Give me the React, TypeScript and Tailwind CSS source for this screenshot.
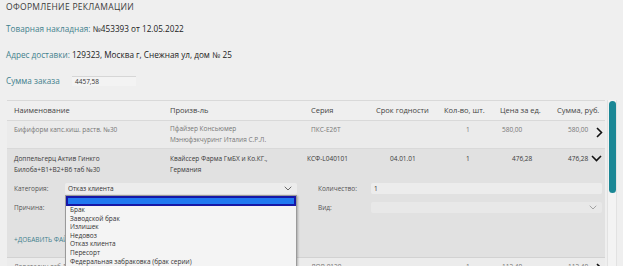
import React from "react";

const options = [
  "Брак",
  "Заводской брак",
  "Излишек",
  "Недовоз",
  "Отказ клиента",
  "Пересорт",
  "Федеральная забраковка (брак серии)",
];

function ChevronRight() {
  return (
    <svg width="7" height="11" viewBox="0 0 7 11" className="block">
      <path d="M1 1l4.5 4.5L1 10" fill="none" stroke="#111" strokeWidth="1.6" />
    </svg>
  );
}

function ChevronDown({ size = 11, color = "#111", w = 1.6 }: { size?: number; color?: string; w?: number }) {
  return (
    <svg width={size} height={size * 0.64} viewBox="0 0 11 7" className="block">
      <path d="M1 1l4.5 4.5L10 1" fill="none" stroke={color} strokeWidth={w} />
    </svg>
  );
}

const cols = "grid grid-cols-[163px_141px_65px_68px_56px_57px_1fr]";

export default function App() {
  return (
    <div
      className="relative w-[623px] h-[266px] overflow-hidden bg-[#efefef] text-[#333]"
      style={{ fontFamily: '"Open Sans", "Noto Sans", sans-serif' }}
    >
      {/* шапка */}
      <div className="pl-[6px] pt-[1px]">
        <div className="text-[8.5px] leading-[12px] text-[#3a3a3a] tracking-[0.3px]">ОФОРМЛЕНИЕ РЕКЛАМАЦИИ</div>
        <div className="mt-[10px] text-[8.2px] leading-[12px]">
          <span className="text-[#3f7f8d]">Товарная накладная: </span>
          <span className="text-[#222]">№453393 от 12.05.2022</span>
        </div>
        <div className="mt-[14px] text-[8.2px] leading-[12px]">
          <span className="text-[#3f7f8d]">Адрес доставки: </span>
          <span className="text-[#222]">129323, Москва г, Снежная ул, дом № 25</span>
        </div>
        <div className="mt-[14px] flex items-center text-[8.2px] leading-[12px]">
          <span className="text-[#3f7f8d] w-[66px]">Сумма заказа</span>
          <div className="w-[64px] h-[10px] bg-[#f3f3f3] border-t border-[#d6d6d6] text-[6.5px] leading-[9px] pl-[3px] text-[#333]">
            4457,58
          </div>
        </div>
      </div>

      {/* таблица */}
      <div className="mt-[13px] flex">
        <div className="ml-[7px] w-[598px]">
          <div className={`${cols} h-[21px] items-center border-y border-[#d9d9d9] text-[7.5px] text-[#444]`}>
            <div className="pl-[7px]">Наименование</div>
            <div>Произв-ль</div>
            <div>Серия</div>
            <div>Срок годности</div>
            <div>Кол-во, шт.</div>
            <div>Цена за ед.</div>
            <div>Сумма, руб.</div>
          </div>

          <div className={`${cols} h-[28px] items-start bg-[#ebebeb] border-b border-[#d9d9d9] text-[6.5px] leading-[11px] text-[#777]`}>
            <div className="pl-[7px] pt-[3px]">Бифиформ капс.киш. раств. №30</div>
            <div className="pt-[2px]">
              Пфайзер Консьюмер
              <br />
              Мэнюфэкчуринг Италия С.Р.Л.
            </div>
            <div className="pt-[3px]">ПКС-Е26Т</div>
            <div />
            <div className="pt-[3px] pl-[22px]">1</div>
            <div className="pt-[3px] pl-[2px]">580,00</div>
            <div className="flex items-start pt-[3px] pl-[11px] gap-[8px]">
              <span>580,00</span>
              <span className="pt-[3px]">
                <ChevronRight />
              </span>
            </div>
          </div>

          <div className="bg-[#e1e1e1] h-[109px] border-b border-[#d2d2d2]">
            <div className={`${cols} items-start pt-[4px] text-[6.5px] leading-[11px] text-[#3a3a3a] font-medium`}>
              <div className="pl-[7px]">
                Доппельгерц Актив Гинкго
                <br />
                Билоба+В1+В2+В6 таб №30
              </div>
              <div>
                Квайссер Фарма ГмБХ и Ко.КГ.,
                <br />
                Германия
              </div>
              <div className="-ml-[4px]">КСФ-L040101</div>
              <div className="pl-[14px]">04.01.01</div>
              <div className="pl-[22px]">1</div>
              <div className="pl-[12px]">476,28</div>
              <div className="flex items-center pl-[11px] gap-[3px] h-[11px]">
                <span>476,28</span>
                <ChevronDown />
              </div>
            </div>

            <div className="mt-[8px] flex items-center text-[6.5px] text-[#555]">
              <div className="w-[58px] pl-[7px]">Категория:</div>
              <div className="w-[232px] h-[11px] bg-[#ececec] rounded-[2px] flex items-center justify-between pl-[3px] pr-[5px] text-[#333]">
                <span>Отказ клиента</span>
                <ChevronDown size={8} color="#555" w={1.2} />
              </div>
              <div className="w-[74px] pl-[21px]">Количество:</div>
              <div className="w-[231px] h-[11px] bg-[#ececec] rounded-[2px] pl-[3px] leading-[11px] text-[#333]">1</div>
            </div>

            <div className="mt-[8px] flex items-center text-[6.5px] text-[#555]">
              <div className="w-[58px] pl-[7px]">Причина:</div>
              <div className="w-[232px]" />
              <div className="w-[74px] pl-[21px]">Вид:</div>
              <div className="w-[231px] h-[11px] bg-[#e8e8e8] rounded-[2px] flex items-center justify-end pr-[5px]">
                <ChevronDown size={8} color="#888" w={1} />
              </div>
            </div>

            <div className="mt-[22px] pl-[7px] text-[6.5px] text-[#3f7f8d]">+ДОБАВИТЬ ФАЙЛ</div>
          </div>

          <div className={`${cols} h-[12px] items-start bg-[#ececec] text-[6.5px] text-[#777]`}>
            <div className="pl-[7px] pt-[4px]">Лоратадин таб 10мг №10</div>
            <div className="pt-[4px]">Озон ООО</div>
            <div className="pt-[4px]">ЛОР-0120</div>
            <div />
            <div className="pt-[4px] pl-[22px]">1</div>
            <div className="pt-[4px] pl-[2px]">112,40</div>
            <div className="flex pt-[4px] pl-[11px] gap-[8px]">
              <span>112,40</span>
              <span className="pt-[1px]">
                <ChevronRight />
              </span>
            </div>
          </div>
        </div>

        {/* скролл */}
        <div className="ml-[2px] w-[10px] h-[170px] bg-[#f3f3f3] border-x border-[#e2e2e2] flex justify-center">
          <div className="w-[7px] h-[92px] mt-[1px] rounded-[4px] bg-[#1a8795]" />
        </div>
      </div>

      {/* выпадающий список */}
      <div className="absolute left-[65px] top-[195px] w-[232px] bg-[#f4f4f4] border border-[#9a9a9a] text-[6.5px] leading-[8.6px] text-[#333] shadow-[1px_1px_2px_rgba(0,0,0,0.25)]">
        <div className="h-[10px] bg-[#1f78f0] border-[2px] border-[#1616a6]" />
        {options.map((o) => (
          <div key={o} className="pl-[4px]">
            {o}
          </div>
        ))}
      </div>
    </div>
  );
}
